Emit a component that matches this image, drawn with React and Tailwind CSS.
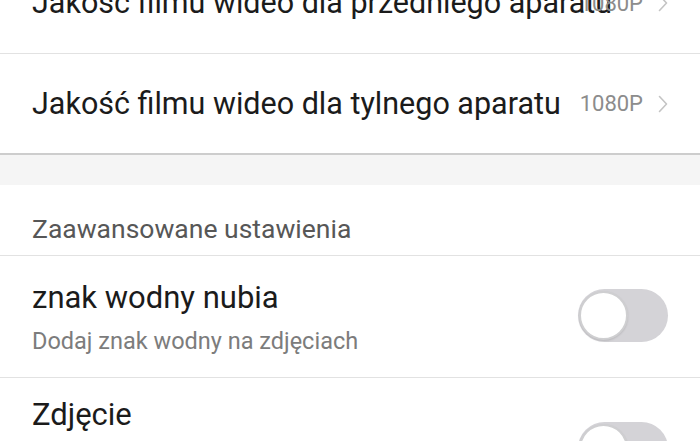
import React from "react";

function Chevron() {
  return (
    <svg width="10" height="18" viewBox="0 0 10 18" fill="none" className="shrink-0">
      <path d="M1.5 1.5 L8.5 9 L1.5 16.5" stroke="#c4c4c4" strokeWidth="1.6" strokeLinecap="round" strokeLinejoin="round" />
    </svg>
  );
}

function Toggle() {
  return (
    <div className="relative w-[90px] h-[53px] rounded-full bg-[#d4d3d7] shrink-0">
      <div className="absolute left-[1px] top-[2px] w-[49px] h-[49px] rounded-full bg-white border-[2px] border-[#cfcfd1] shadow-[0_1px_2px_rgba(0,0,0,0.12)]" />
    </div>
  );
}

function ValueRow({ title, value, last }) {
  return (
    <div
      className={
        "flex items-center h-[101px] pl-[32px] pr-[32px] bg-white " +
        (last ? "border-b-2 border-[#cdcdcd]" : "border-b border-[#e2e2e2]")
      }
    >
      <div className="flex-1 min-w-0 whitespace-nowrap text-[30.5px] leading-[36px] text-[#1b1b1b]">
        {title}
      </div>
      <div className="flex items-center shrink-0 gap-[15px]">
        <span className="text-[22px] text-[#8c8c8c]">{value}</span>
        <Chevron />
      </div>
    </div>
  );
}

export default function App() {
  return (
    <div
      className="w-[700px] h-[441px] overflow-hidden bg-white"
      style={{ fontFamily: "Roboto, 'Noto Sans', sans-serif" }}
    >
      <div className="-mt-[47px]">
        <ValueRow title="Jakość filmu wideo dla przedniego aparatu" value="1080P" />
        <ValueRow title="Jakość filmu wideo dla tylnego aparatu" value="1080P" last />
        <div className="h-[30px] bg-[#f5f5f5]" />
        <div className="flex items-start h-[71px] pl-[32px] pt-[29px] bg-white border-b border-[#e2e2e2]">
          <span className="text-[26.5px] leading-[30px] text-[#575757]">Zaawansowane ustawienia</span>
        </div>
        <div className="flex items-start justify-between h-[122px] pl-[32px] pr-[32px] bg-white border-b border-[#e2e2e2]">
          <div className="flex flex-col pt-[24px]">
            <span className="text-[31px] leading-[36px] text-[#1b1b1b]">znak wodny nubia</span>
            <span className="mt-[12px] text-[23.5px] leading-[27px] text-[#7c7c7c]">Dodaj znak wodny na zdjęciach</span>
          </div>
          <div className="mt-[33px]">
            <Toggle />
          </div>
        </div>
        <div className="flex items-start justify-between h-[140px] pl-[32px] pr-[32px] bg-white">
          <div className="flex flex-col pt-[19px]">
            <span className="text-[31px] leading-[36px] text-[#1b1b1b]">Zdjęcie</span>
          </div>
          <div className="mt-[44px]">
            <Toggle />
          </div>
        </div>
      </div>
    </div>
  );
}
